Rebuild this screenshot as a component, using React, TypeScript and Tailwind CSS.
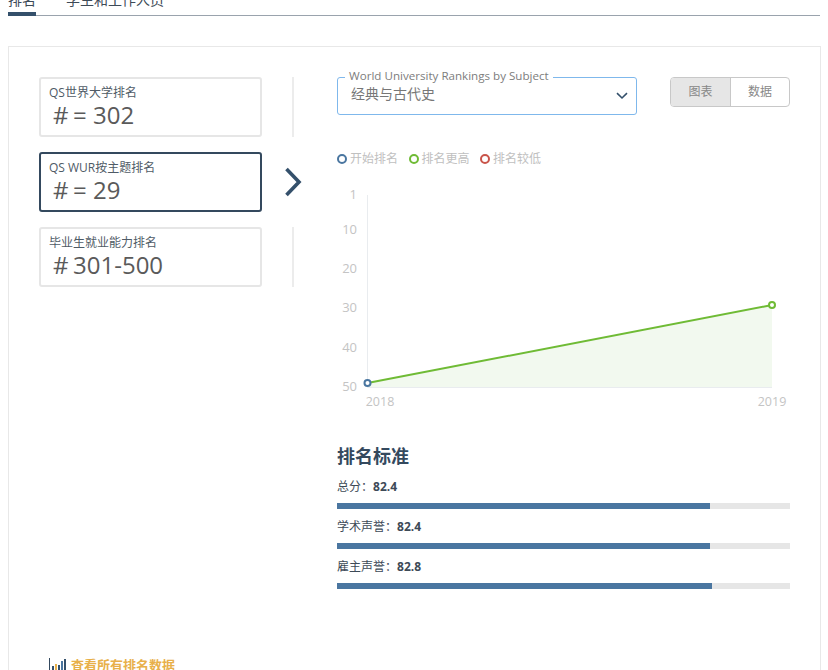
function RankCard({ title, value, active }: { title: string; value: string; active?: boolean }) {
  return (
    <div className={`h-[60px] w-[223px] rounded-[3px] border-2 pl-[8px] pt-[6px] ${active ? "border-[#34495e]" : "border-[#e6e6e6]"}`}>
      <div className="text-[12px] leading-[16px] text-[#4f5b66]">{title}</div>
      <div className="flex gap-[4.5px] pl-[4px] text-[24px] leading-[27px] text-[#5a5a5a]">
        <span>#</span>
        <span>{value}</span>
      </div>
    </div>
  );
}

function Divider() {
  return <div className="ml-[30px] h-[60px] w-[2px] bg-[#ececec]" />;
}

function Arrow() {
  return (
    <div className="ml-[22px] flex h-[60px] items-center">
      <svg width="18" height="30" viewBox="0 0 18 30" fill="none">
        <path d="M2.5 2 L15 15 L2.5 28" stroke="#34506b" strokeWidth="3.6" />
      </svg>
    </div>
  );
}

function Score({ label, value, pct }: { label: string; value: string; pct: number }) {
  return (
    <div className="h-[40px]">
      <div className="h-[26px] text-[12px] leading-[20px] text-[#3d4a57]">
        {label}：<span className="font-bold">{value}</span>
      </div>
      <div className="h-[6px] w-full bg-[#e6e6e6]">
        <div className="h-full bg-[#4a76a0]" style={{ width: `${pct}%` }} />
      </div>
    </div>
  );
}

function Legend({ color, label }: { color: string; label: string }) {
  return (
    <div className="flex items-center gap-[3px]">
      <span className={`h-[10px] w-[10px] rounded-full border-2 ${color}`} />
      <span className="text-[12px] leading-[16px] text-[#c0c0c0]">{label}</span>
    </div>
  );
}

function Chart() {
  const ticks: [string, number][] = [["1", 194], ["10", 229], ["20", 268], ["30", 307.5], ["40", 347], ["50", 386]];
  return (
    <svg width="453" height="225" viewBox="337 185 453 225" className="mt-[18px] block">
      <path d="M367.5 383 L772 305 V387.5 H367.5 Z" fill="#f2f9ef" />
      <path d="M367.5 195 V387.5 H772" fill="none" stroke="#e9ecef" strokeWidth="1" />
      <path d="M367.5 383 L772 305" fill="none" stroke="#6fbb35" strokeWidth="2" />
      <circle cx="367.5" cy="383" r="3" fill="#fff" stroke="#4a76a0" strokeWidth="2" />
      <circle cx="772" cy="305" r="3" fill="#fff" stroke="#6fbb35" strokeWidth="2" />
      {ticks.map(([t, y]) => (
        <text key={t} x="357" y={y + 4.5} textAnchor="end" fontSize="13" fill="#c4c4c4">{t}</text>
      ))}
      <text x="380" y="406" textAnchor="middle" fontSize="12.5" fill="#c4c4c4">2018</text>
      <text x="772" y="406" textAnchor="middle" fontSize="12.5" fill="#c4c4c4">2019</text>
    </svg>
  );
}

export default function App() {
  return (
    <div className="h-[670px] w-[828px] overflow-hidden bg-white font-['Open_Sans','Noto_Sans_CJK_SC',sans-serif]">
      <div className="mx-[8px] -mt-[10px] flex h-[26px] gap-[30px] border-b border-[#9aa3ad] text-[14px] leading-[20px] text-[#3d4a57]">
        <div className="h-[26px] border-b-4 border-[#34506b]">排名</div>
        <div>学生和工作人员</div>
      </div>
      <div className="ml-[8px] mr-[7px] mt-[30px] h-[700px] border border-[#e8e8e8] pl-[30px] pt-[30px]">
        <div className="flex">
          <div className="flex w-[298px] flex-col gap-[15px]">
            <div className="flex"><RankCard title="QS世界大学排名" value="= 302" /><Divider /></div>
            <div className="flex"><RankCard title="QS WUR按主题排名" value="= 29" active /><Arrow /></div>
            <div className="flex"><RankCard title="毕业生就业能力排名" value="301-500" /><Divider /></div>
          </div>
          <div className="w-[453px]">
            <div className="flex items-start justify-between">
              <div className="relative flex h-[38px] w-[300px] items-center justify-between rounded-[3px] border border-[#7fb8ec] pl-[13px] pr-[8px]">
                <span className="absolute -top-[9px] left-[7px] bg-white px-[4px] text-[11.6px] leading-[14px] text-[#7d7d7d]">World University Rankings by Subject</span>
                <span className="-mt-[4px] text-[14px] leading-[20px] text-[#777]">经典与古代史</span>
                <svg width="12" height="8" viewBox="0 0 12 8" fill="none">
                  <path d="M1 1.2 L6 6 L11 1.2" stroke="#34506b" strokeWidth="1.6" />
                </svg>
              </div>
              <div className="flex h-[30px] w-[120px] overflow-hidden rounded-[4px] border border-[#c8c8c8] text-[12px] text-[#888]">
                <div className="flex w-[60px] items-center justify-center border-r border-[#c8c8c8] bg-[#e6e6e6]">图表</div>
                <div className="flex flex-1 items-center justify-center">数据</div>
              </div>
            </div>
            <div className="mt-[36px] flex h-[16px] gap-[10.5px]">
              <Legend color="border-[#4a76a0]" label="开始排名" />
              <Legend color="border-[#6fbb35]" label="排名更高" />
              <Legend color="border-[#c9544a]" label="排名较低" />
            </div>
            <Chart />
            <h3 className="mt-[33px] text-[18px] font-bold leading-[26px] text-[#34495e]">排名标准</h3>
            <div className="mt-[8px]">
              <Score label="总分" value="82.4" pct={82.4} />
              <Score label="学术声誉" value="82.4" pct={82.4} />
              <Score label="雇主声誉" value="82.8" pct={82.8} />
            </div>
          </div>
        </div>
        <div className="mt-[59px] flex items-center gap-[4px] pl-[10px]">
          <svg width="18" height="14" viewBox="0 0 18 14" fill="none">
            <path d="M0.5 0 V13.5 H18" stroke="#34495e" strokeWidth="1" />
            <rect x="3" y="8" width="2" height="5" fill="#34506b" />
            <rect x="6" y="6" width="2" height="7" fill="#e8b04a" />
            <rect x="9" y="7" width="2" height="6" fill="#34506b" />
            <rect x="12" y="3" width="2" height="10" fill="#4a76a0" />
            <rect x="15" y="1" width="2" height="12" fill="#34506b" />
          </svg>
          <span className="text-[13px] font-bold leading-[18px] text-[#e8b04a]">查看所有排名数据</span>
        </div>
      </div>
    </div>
  );
}
